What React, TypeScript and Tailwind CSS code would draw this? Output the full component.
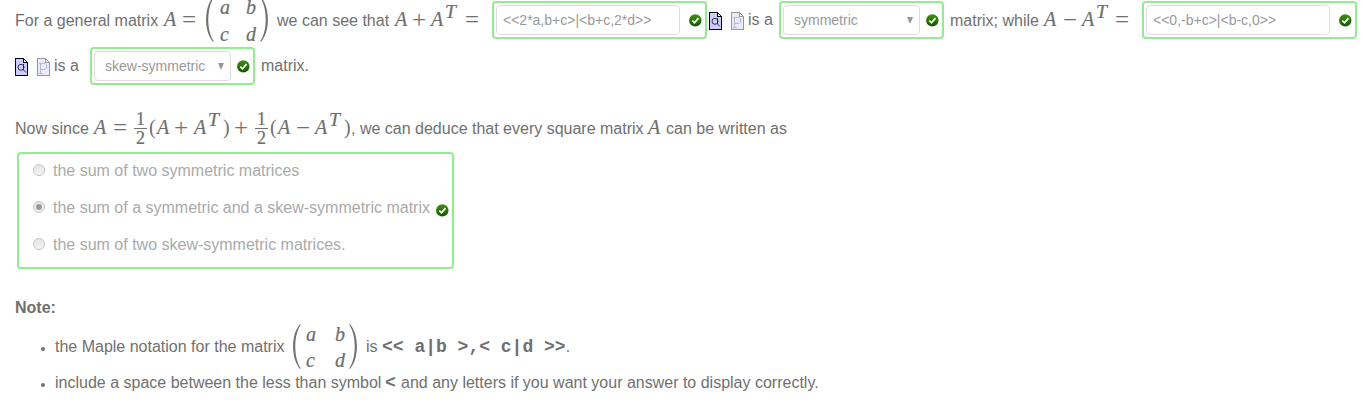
import type { ReactNode } from "react";

function T({ w, children }: { w: string; children: ReactNode }) {
  return <span className={`shrink-0 text-[16px] leading-6 ${w}`}>{children}</span>;
}

function V({ w, children }: { w: string; children: ReactNode }) {
  return (
    <span className={`shrink-0 font-['Liberation_Serif',serif] text-[20px] leading-6 italic [-webkit-text-stroke:0.2px_#666] ${w}`}>
      {children}
    </span>
  );
}

function Sup({ w }: { w: string }) {
  return (
    <span className={`shrink-0 origin-left -translate-y-2 scale-x-110 font-['Liberation_Serif',serif] text-[18px] leading-6 italic [-webkit-text-stroke:0.2px_#666] ${w}`}>
      T
    </span>
  );
}

function Op({ w, children }: { w: string; children: ReactNode }) {
  return (
    <span className={`shrink-0 translate-y-[2px] font-['Liberation_Serif',serif] text-[25px] leading-6 ${w}`}>{children}</span>
  );
}

function Paren({ w, children }: { w: string; children: ReactNode }) {
  return (
    <span className={`shrink-0 font-['Liberation_Serif',serif] text-[20px] leading-6 ${w}`}>{children}</span>
  );
}

function Line({ w = "", children }: { w?: string; children: ReactNode }) {
  return <span className={`-mt-[2px] flex shrink-0 items-baseline ${w}`}>{children}</span>;
}

function Half({ w }: { w: string }) {
  return (
    <span className={`shrink-0 ${w}`}>
      <span className="flex w-[13px] flex-col items-center font-['Liberation_Serif',serif] text-[18px] [-webkit-text-stroke:0.2px_#666]">
        <span className="h-[17px] leading-[17px]">1</span>
        <span className="h-px w-full bg-[#707070]" />
        <span className="h-[17px] leading-[19px]">2</span>
      </span>
    </span>
  );
}

function Matrix({ w, inner, rows }: { w: string; inner: string; rows: string }) {
  return (
    <span className={`flex h-[45px] shrink-0 ${w}`}>
      <svg width="9" height="45" viewBox="0 0 9 45" className="shrink-0">
        <path d="M8.2 0C-1.3 10-1.3 35 8.2 45L8.8 44.3C1.4 34 1.4 11 8.8.7Z" fill="#707070" />
      </svg>
      <span className={`grid shrink-0 font-['Liberation_Serif',serif] text-[20px] italic [-webkit-text-stroke:0.2px_#666] ${inner} ${rows}`}>
        <span>a</span>
        <span>b</span>
        <span>c</span>
        <span>d</span>
      </span>
      <svg width="9" height="45" viewBox="0 0 9 45" className="shrink-0">
        <path d="M.8 0C10.3 10 10.3 35 .8 45L.2 44.3C7.6 34 7.6 11 .2.7Z" fill="#707070" />
      </svg>
    </span>
  );
}

function Check() {
  return (
    <svg width="13" height="13" viewBox="0 0 13 13" className="shrink-0">
      <defs>
        <linearGradient id="green" x1="0" y1="0" x2="0" y2="1">
          <stop offset="0" stopColor="#43900e" />
          <stop offset="0.5" stopColor="#257606" />
          <stop offset="1" stopColor="#185303" />
        </linearGradient>
      </defs>
      <circle cx="6.3" cy="6.4" r="6.2" fill="url(#green)" />
      <path d="M3.3 6.7 5.5 8.8 9.5 4.2" fill="none" stroke="#fff" strokeWidth="1.8" />
    </svg>
  );
}

function Page({ faded = false }: { faded?: boolean }) {
  return (
    <svg width="13" height="18" viewBox="0 0 13 18" className={faded ? "shrink-0 opacity-40" : "shrink-0"}>
      <g shapeRendering="crispEdges">
        <path d="M.5.5H8.5L12.5 4.5V17.5H.5Z" fill="#ccccff" stroke="#000" />
        <path d="M8.5.5V4.5H12.5Z" fill="#fff" stroke="#000" />
      </g>
      {faded ? (
        <path d="M2 5.5H4M3.5 5V15M2 15.5H6M4 6.5 5 5.5H8L9.5 7V10L8 11.5H4" fill="none" stroke="#445" strokeWidth=".9" />
      ) : (
        <>
          <circle cx="6" cy="9.3" r="3" fill="none" stroke="#223" strokeWidth=".9" />
          <path d="M8.5 6V12L11 14.5" fill="none" stroke="#223" strokeWidth=".9" />
        </>
      )}
    </svg>
  );
}

function Docs({ w = "" }: { w?: string }) {
  return (
    <span className={`flex w-[39px] shrink-0 gap-[9px] ${w}`}>
      <Page />
      <Page faded />
    </span>
  );
}

function InputBox({ value }: { value: string }) {
  return (
    <span className="flex h-[38px] w-[215px] shrink-0 items-center rounded border-2 border-[#90ee90] pl-[2px]">
      <span className="mr-[9px] flex h-[30px] w-[184px] items-center rounded border border-[#ddd] pl-[6px] text-[14px] text-[#999]">
        {value}
      </span>
      <Check />
    </span>
  );
}

function SelectBox({ value }: { value: string }) {
  return (
    <span className="flex h-[38px] w-[165px] shrink-0 items-center rounded border-2 border-[#90ee90] pl-[2px]">
      <span className="mr-[6px] flex h-[30px] w-[137px] items-center justify-between rounded border border-[#ddd] pr-[6px] pl-[10px] text-[14px] text-[#999]">
        {value}
        <svg width="6" height="6" viewBox="0 0 6 6">
          <path d="M0 0H6L3.5 6H2.5Z" fill="#999" />
        </svg>
      </span>
      <Check />
    </span>
  );
}

function Choice({ label, checked = false }: { label: string; checked?: boolean }) {
  return (
    <div className="flex h-[37px] items-center text-[16px] text-[#aaa]">
      <span className="-mt-px mr-2 flex size-3 items-center justify-center rounded-full border border-[#c4c4c4] bg-gradient-to-b from-[#e6e6e6] to-[#f4f4f4]">
        {checked && <span className="size-1.5 rounded-full bg-[#999]" />}
      </span>
      <span className="whitespace-nowrap">{label}</span>
      {checked && (
        <span className="ml-1.5 pt-[6px]">
          <Check />
        </span>
      )}
    </div>
  );
}

export default function App() {
  return (
    <main className="h-[408px] w-[1363px] overflow-hidden bg-white font-['Liberation_Sans',Arial,sans-serif] whitespace-nowrap text-[#707070]">
      <div className="flex h-10 items-center pl-[15px]">
        <Line w="w-[190px]">
          <T w="w-[149px]">For a general matrix</T>
          <V w="w-[18px]">A</V>
          <Op w="w-[14px]">=</Op>
        </Line>
        <Matrix w="w-[72px] -mt-px" inner="w-[46px] pl-[6px] grid-cols-[26px_14px]" rows="grid-rows-[27px_27px] leading-[26px] -mt-[3px]" />
        <Line w="w-[215px]">
          <T w="w-[118px]">we can see that</T>
          <V w="w-[17px]">A</V>
          <Op w="w-[19px]">+</Op>
          <V w="w-[14px]">A</V>
          <Sup w="w-[20px]" />
          <Op w="w-[14px]">=</Op>
        </Line>
        <InputBox value="<<2*a,b+c>|<b+c,2*d>>" />
        <span className="flex w-[72px] shrink-0 items-center pl-[2px]">
          <Docs w="pt-px" />
          <T w="w-[31px]">is a</T>
        </span>
        <SelectBox value="symmetric" />
        <Line w="w-[198px] pl-[6px]">
          <T w="w-[94px]">matrix; while</T>
          <V w="w-[19px]">A</V>
          <Op w="w-[19px]">−</Op>
          <V w="w-[14px]">A</V>
          <Sup w="w-[19px]" />
          <Op w="w-[14px]">=</Op>
        </Line>
        <InputBox value="<<0,-b+c>|<b-c,0>>" />
      </div>

      <div className="mt-[7px] flex h-[38px] items-center pl-[15px]">
        <Docs w="pt-px" />
        <T w="w-[36px]">is a</T>
        <SelectBox value="skew-symmetric" />
        <span className="pl-[6px]">matrix.</span>
      </div>

      <div className="mt-[23px] flex h-10 items-center pl-[15px]">
        <Line w="w-[119px]">
          <T w="w-[79px]">Now since</T>
          <V w="w-[19px]">A</V>
          <Op w="w-[14px]">=</Op>
        </Line>
        <Half w="w-[15px]" />
        <Line w="w-[106px]">
          <Paren w="w-[8px]">(</Paren>
          <V w="w-[17px]">A</V>
          <Op w="w-[20px]">+</Op>
          <V w="w-[14px]">A</V>
          <Sup w="w-[15px]" />
          <Paren w="w-[11px]">)</Paren>
          <Op w="w-[20px]">+</Op>
        </Line>
        <Half w="w-[15px]" />
        <Line>
          <Paren w="w-[8px]">(</Paren>
          <V w="w-[18px]">A</V>
          <Op w="w-[19px]">−</Op>
          <V w="w-[14px]">A</V>
          <Sup w="w-[15px]" />
          <Paren w="w-[7px]">)</Paren>
          <T w="w-[297px]">, we can deduce that every square matrix</T>
          <V w="w-[18px]">A</V>
          <T w="">can be written as</T>
        </Line>
      </div>

      <div className="mt-[4px] ml-[17px] h-[117px] w-[437px] rounded border-2 border-[#90ee90] pl-[14px]">
        <div className="-mt-[2px]">
          <Choice label="the sum of two symmetric matrices" />
          <Choice label="the sum of a symmetric and a skew-symmetric matrix" checked />
          <Choice label="the sum of two skew-symmetric matrices." />
        </div>
      </div>

      <div className="mt-[27px] h-6 pl-[15px] text-[16px] leading-6 font-bold">Note:</div>

      <ul>
        <li className="mt-[3px] flex h-12 items-center pl-[41px]">
          <span className="mt-[4px] mr-[10px] size-1 rounded-full bg-[#707070]" />
          <T w="w-[237px]">the Maple notation for the matrix</T>
          <Matrix w="w-[74px] -mt-px" inner="w-[48px] pl-[5px] grid-cols-[29px_14px]" rows="grid-rows-[26px_26px] leading-[26px] -mt-[3px]" />
          <span className="flex items-baseline">
            <T w="w-[16px]">is</T>
            <code className="font-['Liberation_Mono',monospace] text-[18px] leading-6 font-bold whitespace-pre">{"<< a|b >,< c|d >>"}</code>
            <T w="">.</T>
          </span>
        </li>
        <li className="flex h-6 items-center pl-[41px]">
          <span className="mt-[4px] mr-[10px] size-1 rounded-full bg-[#707070]" />
          <span className="flex items-baseline">
            <T w="w-[330px]">include a space between the less than symbol</T>
            <code className="w-[16px] font-['Liberation_Mono',monospace] text-[18px] leading-6 font-bold">{"<"}</code>
            <T w="">and any letters if you want your answer to display correctly.</T>
          </span>
        </li>
      </ul>
    </main>
  );
}
